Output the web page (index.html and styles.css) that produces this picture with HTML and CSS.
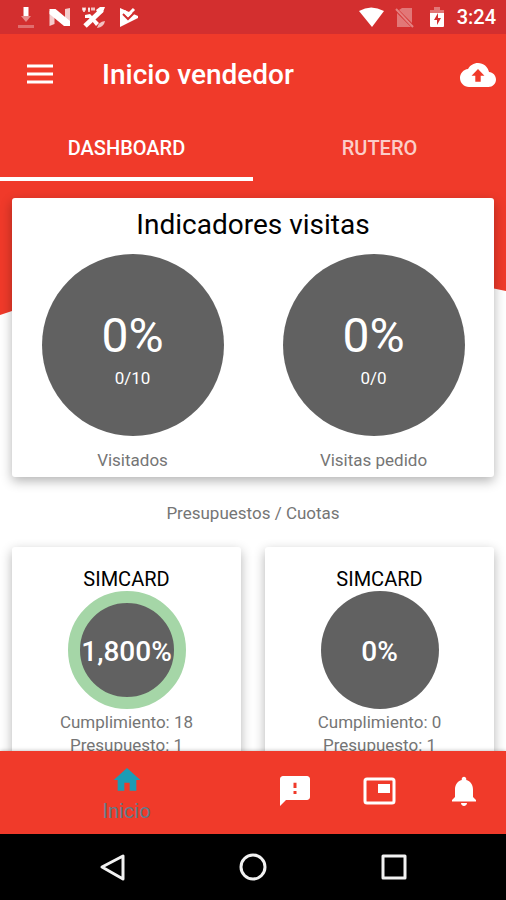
FILE: index.html
```html
<!DOCTYPE html>
<html lang="es">
<head>
   <meta charset="UTF-8">
   <meta name="viewport" content="width=device-width, initial-scale=1.0">
   <title>Inicio vendedor</title>
   <link rel="stylesheet" href="styles.css">
</head>
<body>
   <div class="status-bar">
      <div class="status-left">
         <svg width="24" height="24" viewBox="0 0 24 24" fill="#fff">
            <path d="M9.500 2h5v9h-5z"/>
            <path d="M7 11h10l-5 6z" opacity=".45"/>
            <path d="M4 20h16v3H4z" opacity=".3"/>
         </svg>
         <svg width="24" height="24" viewBox="0 0 24 24" fill="#fff">
            <path d="M1.500 6v15l5-2V9zM17 4l5-1v16l-5-4z" opacity=".75"/>
            <path d="M1.500 4h6L22 16v5h-6L1.500 9z"/>
         </svg>
         <svg width="24" height="24" viewBox="0 0 24 24" fill="none" stroke="#fff">
            <path d="M0 4h4M6 4h2M9 4h4" stroke-width="3" opacity=".7"/>
            <path d="M2 3v4M7 3v4" stroke-width="2" opacity=".7"/>
            <path d="M20 5L3 21" stroke-width="5"/>
            <path d="M14 5l4-3h5l-2 5-4 3zM3 10l5-1 9 9-3 3-4-5-3-3H3z" fill="#fff" stroke="none"/>
            <path d="M15 23q1-6 8-7-1 6-8 7z" fill="#fff" stroke="none" opacity=".7"/>
         </svg>
         <svg width="24" height="24" viewBox="0 0 24 24">
            <path d="M4 3l18 8v2L4 22z" fill="#fff"/>
            <path d="M7 9l5 5 8-8" fill="none" stroke="#d32f2f" stroke-width="2"/>
            <path d="M8 6l4 4 6-6" fill="none" stroke="#fff" stroke-width="3"/>
         </svg>
      </div>
      <div class="status-right">
         <svg width="28" height="24" viewBox="0 0 28 24" fill="#fff">
            <path d="M2 6q12-7 25 0L15 22z"/>
         </svg>
         <svg width="24" height="24" viewBox="0 0 24 24">
            <path d="M9 3h10v15L6 5zM4 8l14 14H4z" fill="#fff" opacity=".35"/>
            <path d="M3 4l17 18" fill="none" stroke="#fff" stroke-width="2" opacity=".4"/>
         </svg>
         <svg width="24" height="24" viewBox="0 0 24 24">
            <path d="M9 2h6v3h4v4H5V5h4z" fill="#fff" opacity=".35"/>
            <path d="M5 8h14v13q0 1-1 1H6q-1 0-1-1z" fill="#fff"/>
            <path d="M13 8l-4 7h3v5l4-7h-3z" fill="#d32f2f"/>
         </svg>
         <span class="clock">3:24</span>
      </div>
   </div>

   <header class="toolbar">
      <button class="icon-btn" aria-label="Menú">
         <svg width="36" height="36" viewBox="0 0 36 36" fill="none" stroke="#fff" stroke-width="3">
            <path d="M5 9h26M5 17h26M5 25h26"/>
         </svg>
      </button>
      <h1>Inicio vendedor</h1>
      <button class="icon-btn" aria-label="Sincronizar">
         <svg width="36" height="36" viewBox="0 0 24 24">
            <path d="M19.350 10.040C18.670 6.590 15.640 4 12 4 9.110 4 6.600 5.640 5.350 8.040 2.340 8.360 0 10.910 0 14c0 3.310 2.690 6 6 6h13c2.760 0 5-2.240 5-5 0-2.640-2.050-4.780-4.650-4.960z" fill="#fff"/>
            <path d="M12 8l4.300 4.500h-2.500V16.500h-3.600v-4H7.700z" fill="#f03a2a"/>
         </svg>
      </button>
   </header>

   <nav class="tabs">
      <a href="#dashboard" class="tab active">DASHBOARD</a>
      <a href="#rutero" class="tab">RUTERO</a>
   </nav>

   <main class="content" id="dashboard">
      <svg class="wave" viewBox="0 0 506 134" preserveAspectRatio="none">
         <path d="M0 0H506V110Q237 51 0 134z" fill="#f03a2a"/>
      </svg>

      <section class="card visits">
         <h2>Indicadores visitas</h2>
         <div class="visits-row">
            <div class="indicator">
               <div class="circle big">
                  <span class="percent">0%</span>
                  <span class="count">0/10</span>
               </div>
               <p>Visitados</p>
            </div>
            <div class="indicator">
               <div class="circle big">
                  <span class="percent">0%</span>
                  <span class="count">0/0</span>
               </div>
               <p>Visitas pedido</p>
            </div>
         </div>
      </section>

      <p class="section-title">Presupuestos / Cuotas</p>

      <div class="quotas">
         <section class="card quota">
            <h3>SIMCARD</h3>
            <div class="circle small done">1,800%</div>
            <p>Cumplimiento: 18</p>
            <p>Presupuesto: 1</p>
         </section>
         <section class="card quota">
            <h3>SIMCARD</h3>
            <div class="circle small">0%</div>
            <p>Cumplimiento: 0</p>
            <p>Presupuesto: 1</p>
         </section>
      </div>
   </main>

   <nav class="bottom-nav">
      <a href="#inicio" class="nav-item active">
         <svg width="32" height="32" viewBox="0 0 24 24" fill="#1c9cb4">
            <path d="M10 20v-6h4v6h5v-8h3L12 3 2 12h3v8z"/>
         </svg>
         <span>Inicio</span>
      </a>
      <a href="#mensajes" class="nav-item" aria-label="Mensajes">
         <svg width="36" height="36" viewBox="0 0 24 24">
            <path d="M20 2H4c-1.100 0-2 .9-2 2v18l4-4h14c1.100 0 2-.9 2-2V4c0-1.100-.9-2-2-2z" fill="#fff"/>
            <path d="M11 6.500h2V10h-2zM11 12h2v2h-2z" fill="#f03a2a"/>
         </svg>
      </a>
      <a href="#catalogo" class="nav-item" aria-label="Catálogo">
         <svg width="36" height="36" viewBox="0 0 36 36">
            <rect x="4" y="6" width="29" height="24" rx="2" fill="none" stroke="#fff" stroke-width="3"/>
            <path d="M17 11h12v9H17z" fill="#fff"/>
         </svg>
      </a>
      <a href="#avisos" class="nav-item" aria-label="Avisos">
         <svg width="36" height="36" viewBox="0 0 24 24" fill="#fff">
            <path d="M12 22c1.100 0 2-.9 2-2h-4c0 1.100.89 2 2 2zm6-6v-5c0-3.070-1.640-5.640-4.500-6.320V4c0-.83-.67-1.500-1.500-1.500s-1.500.67-1.500 1.500v.68C7.630 5.360 6 7.920 6 11v5l-2 2v1h16v-1l-2-2z"/>
         </svg>
      </a>
   </nav>

   <div class="system-nav">
      <button class="icon-btn" aria-label="Atrás">
         <svg width="32" height="32" viewBox="0 0 32 32" fill="none" stroke="#f2f2f2" stroke-width="3" stroke-linejoin="round">
            <path d="M26 5v23L5 16z"/>
         </svg>
      </button>
      <button class="icon-btn" aria-label="Pantalla de inicio">
         <svg width="32" height="32" viewBox="0 0 32 32" fill="none" stroke="#f2f2f2" stroke-width="3">
            <circle cx="16" cy="16" r="12"/>
         </svg>
      </button>
      <button class="icon-btn" aria-label="Recientes">
         <svg width="32" height="32" viewBox="0 0 32 32" fill="none" stroke="#f2f2f2" stroke-width="3" stroke-linejoin="round">
            <path d="M6 5h22v22H6z"/>
         </svg>
      </button>
   </div>
</body>
</html>
```

FILE: styles.css
```css
*{
   margin: 0;
   padding: 0;
   box-sizing: border-box;
}
body{
   height: 100vh;
   display: flex;
   flex-direction: column;
   font-family: Roboto, "Liberation Sans", sans-serif;
   background: #fff;
}
a{
   text-decoration: none;
}
svg{
   display: block;
}
.icon-btn{
   border: 0;
   background: none;
   cursor: pointer;
}

/* status bar */
.status-bar{
   display: flex;
   justify-content: space-between;
   align-items: center;
   height: 34px;
   padding: 0 10px 0 14px;
   background: #d32f2f;
}
.status-left{
   display: flex;
   gap: 10px;
}
.status-right{
   display: flex;
   align-items: center;
   gap: 8px;
}
.clock{
   font-size: 20px;
   line-height: 24px;
   font-weight: 500;
   color: #fff;
}

/* toolbar and tabs */
.toolbar{
   display: flex;
   align-items: center;
   height: 81px;
   padding: 0 10px 0 22px;
   background: #f03a2a;
}
.toolbar h1{
   flex: 1;
   margin-left: 44px;
   font-size: 28px;
   font-weight: 500;
   color: #fff;
}
.tabs{
   display: flex;
   background: #f03a2a;
}
.tab{
   flex: 1;
   height: 66px;
   border-bottom: 4px solid transparent;
   line-height: 66px;
   text-align: center;
   font-size: 20px;
   font-weight: 500;
   color: rgba(255, 255, 255, 0.75);
}
.tab.active{
   border-color: #fff;
   color: #fff;
}

/* dashboard */
.content{
   position: relative;
   z-index: 0;
   flex: 1;
   min-height: 0;
   padding: 17px 12px 0;
   overflow: hidden;
}
.wave{
   position: absolute;
   top: 0;
   left: 0;
   width: 100%;
   height: 134px;
   z-index: -1;
}
.card{
   background: #fff;
   border-radius: 3px;
   box-shadow: 0 4px 12px rgba(0, 0, 0, 0.3);
   text-align: center;
}
.visits{
   padding: 8px 0 2px;
}
.visits h2{
   font-size: 28px;
   line-height: 38px;
   font-weight: 400;
   color: #000;
}
.visits-row{
   display: grid;
   grid-template-columns: 1fr 1fr;
   padding-top: 10px;
}
.circle{
   display: flex;
   flex-direction: column;
   align-items: center;
   justify-content: center;
   margin: 0 auto;
   border-radius: 50%;
   background: #616161;
   color: #fff;
}
.big{
   width: 182px;
   height: 182px;
   padding-top: 10px;
}
.percent{
   font-size: 48px;
   line-height: 56px;
}
.count{
   font-size: 17px;
   line-height: 28px;
}
.indicator p{
   padding-top: 9px;
   font-size: 17px;
   line-height: 30px;
   color: #757575;
}
.section-title{
   padding: 21px 0 19px;
   font-size: 17px;
   line-height: 30px;
   text-align: center;
   color: #757575;
}
.quotas{
   display: grid;
   grid-template-columns: 1fr 1fr;
   gap: 24px;
}
.quota{
   padding: 20px 0 12px;
}
.quota h3{
   font-size: 20px;
   line-height: 24px;
   font-weight: 400;
   color: #000;
}
.small{
   width: 118px;
   height: 118px;
   margin-bottom: 2px;
   padding-top: 2px;
   font-size: 28px;
   font-weight: 500;
}
.done{
   border: 12px solid #a5d6a7;
}
.quota p{
   font-size: 17px;
   line-height: 23px;
   color: #757575;
}

/* bottom navigation */
.bottom-nav{
   position: relative;
   display: flex;
   height: 83px;
   background: #f03a2a;
   box-shadow: 0 0 4px rgba(0, 0, 0, 0.3);
}
.nav-item{
   flex: 1;
   display: flex;
   flex-direction: column;
   align-items: center;
   justify-content: center;
   padding-bottom: 4px;
}
.nav-item.active{
   flex: 3;
   padding: 4px 0 0;
   font-size: 20px;
   line-height: 30px;
   color: #607d8b;
}
.system-nav{
   display: flex;
   justify-content: center;
   align-items: center;
   gap: 108px;
   height: 66px;
   background: #000;
}
```
